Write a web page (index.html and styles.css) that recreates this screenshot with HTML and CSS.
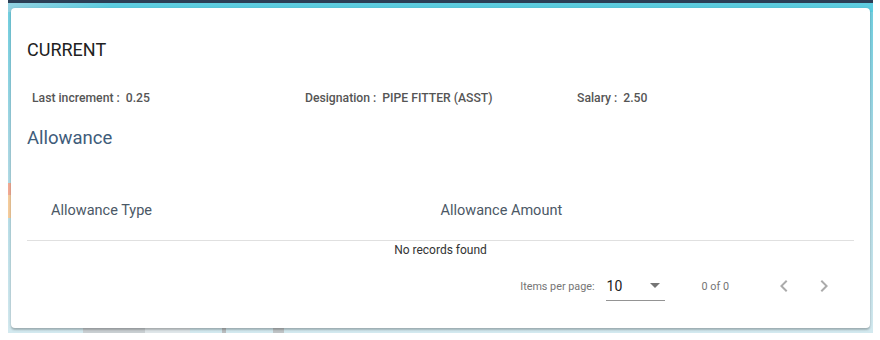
FILE: index.html
```html
<!DOCTYPE html>
<html lang="en">
<head>
    <meta charset="UTF-8">
    <meta name="viewport" content="width=device-width, initial-scale=1.0">
    <title>Current Increment</title>
    <link rel="stylesheet" href="styles.css">
</head>
<body>
    <div class="fundo">
        <div class="cartao">
            <h2 class="titulo">CURRENT</h2>

            <!-- Dados do incremento -->
            <div class="dados">
                <div class="dado">Last increment :&nbsp; 0.25</div>
                <div class="dado">Designation :&nbsp; PIPE FITTER (ASST)</div>
                <div class="dado">Salary :&nbsp; 2.50</div>
            </div>

            <h3 class="secao">Allowance</h3>

            <table class="tabela">
                <thead>
                    <tr>
                        <th class="col-tipo">Allowance Type</th>
                        <th class="col-valor">Allowance Amount</th>
                    </tr>
                </thead>
                <tbody>
                    <tr>
                        <td colspan="2" class="vazio">No records found</td>
                    </tr>
                </tbody>
            </table>

            <!-- Paginação -->
            <div class="paginacao">
                <span class="rotulo">Items per page:</span>
                <div class="seletor">
                    <span class="seletor-valor">10</span>
                    <span class="seta"></span>
                </div>
                <span class="intervalo">0 of 0</span>
                <button class="botao-pagina" disabled>
                    <svg viewBox="0 0 24 24" width="24" height="24"><path d="M15.41 7.41L14 6l-6 6 6 6 1.41-1.41L10.83 12z"/></svg>
                </button>
                <button class="botao-pagina" disabled>
                    <svg viewBox="0 0 24 24" width="24" height="24"><path d="M10 6L8.59 7.41 13.17 12l-4.58 4.59L10 18l6-6z"/></svg>
                </button>
            </div>
        </div>
    </div>
</body>
</html>
```

FILE: styles.css
```css
body {
    margin: 0 7px 0 8px;
    padding: 0;
    background-color: #fff;
    font-family: Roboto, "Helvetica Neue", sans-serif;
}

.fundo {
    height: 333px;
    box-sizing: border-box;
    padding: 8px 3px 0;
    background:
        linear-gradient(#2b3e55, #2b3e55) top left / 100% 3px no-repeat,
        linear-gradient(to bottom, transparent 183px, #f2aa94 183px, #f2aa94 195px, #f5cd9d 195px, #f5cd9d 218px, transparent 218px) left top / 3px 100% no-repeat,
        linear-gradient(to right, transparent 75px, #c9cfd2 75px, #c9cfd2 137px, #dfe6e9 137px, #dfe6e9 182px, transparent 182px, transparent 214px, #b9bdbf 214px, #b9bdbf 218px, transparent 218px, transparent 265px, #bfc4c6 265px, #bfc4c6 276px, transparent 276px) left bottom / 100% 5px no-repeat,
        linear-gradient(to right, #93d2e1, #5dcde0 12%, #5ccbdd 88%, #5dcde0) top left / 100% 12px no-repeat,
        linear-gradient(to bottom, #6fcfe0 0%, #a9d8e4 45%, #d3e9ef 100%);
}

.cartao {
    background-color: #fff;
    border-radius: 4px;
    box-shadow: 0 2px 2px rgba(0, 0, 0, 0.22), 0 0 3px rgba(0, 0, 0, 0.1);
    padding: 30px 16px 14px;
}

.titulo {
    margin: 0;
    font-size: 18px;
    line-height: 24px;
    font-weight: 400;
    color: #212121;
}

.dados {
    display: grid;
    grid-template-columns: 273px 272px auto;
    padding-left: 5px;
    margin-top: 28px;
}

.dado {
    font-size: 12.2px;
    line-height: 16px;
    font-weight: 500;
    color: #555;
}

.secao {
    margin: 20px 0 0;
    font-size: 18.5px;
    line-height: 24px;
    font-weight: 400;
    color: #3e5c7a;
}

.tabela {
    width: 100%;
    border-collapse: collapse;
    margin-top: 34px;
}

.tabela th {
    height: 52px;
    padding: 0 0 4px;
    text-align: left;
    font-size: 14.5px;
    font-weight: 400;
    color: #4b5866;
    border-bottom: 1px solid #e0e0e0;
}

.tabela .col-tipo {
    width: 50%;
    padding-left: 24px;
}

.vazio {
    text-align: center;
    font-size: 12px;
    line-height: 16px;
    font-weight: 400;
    color: #333;
    padding: 1px 0 0;
}

.paginacao {
    display: flex;
    justify-content: flex-end;
    align-items: center;
    min-height: 56px;
    padding: 0 10px 0 8px;
    color: #757575;
    font-size: 10.8px;
}

.rotulo {
    margin: 0 4px;
}

.seletor {
    width: 59px;
    display: flex;
    align-items: center;
    justify-content: space-between;
    margin: 6px 4px 0 7px;
    padding-bottom: 6px;
    border-bottom: 1px solid #949494;
}

.seletor-valor {
    font-size: 14px;
    line-height: 16px;
    color: #212121;
    padding-left: 1px;
}

.seta {
    width: 0;
    height: 0;
    border-left: 5px solid transparent;
    border-right: 5px solid transparent;
    border-top: 5px solid #757575;
    margin-right: 5px;
}

.intervalo {
    margin: 0 35px 0 33px;
}

.botao-pagina {
    width: 40px;
    height: 40px;
    padding: 0;
    border: none;
    background: none;
    display: flex;
    align-items: center;
    justify-content: center;
}

.botao-pagina svg {
    fill: #ababab;
}
```
